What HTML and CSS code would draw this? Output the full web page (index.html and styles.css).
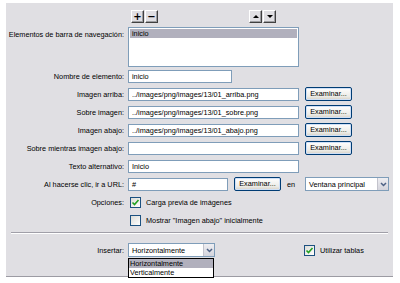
FILE: index.html
```html
<!DOCTYPE html>
<html lang="es">
<head>
<meta charset="utf-8">
<link rel="stylesheet" href="styles.css">
</head>
<body>
<div class="panel">
  <div class="toolrow">
    <div class="pm">
      <span class="sqbtn">+</span><span class="sqbtn">&minus;</span>
    </div>
    <div class="arrows">
      <span class="sqbtn"><span class="tri-up"></span></span><span class="sqbtn"><span class="tri-down"></span></span>
    </div>
  </div>

  <div class="form">
    <div class="row listrow">
      <label class="lbl lbl-top">Elementos de barra de navegación:</label>
      <div class="listbox"><div class="sel">inicio</div></div>
    </div>
    <div class="row">
      <label class="lbl">Nombre de elemento:</label>
      <div class="field short">inicio</div>
    </div>
    <div class="row">
      <label class="lbl">Imagen arriba:</label>
      <div class="field wide">../images/png/images/13/01_arriba.png</div>
      <span class="btn">Examinar...</span>
    </div>
    <div class="row">
      <label class="lbl">Sobre imagen:</label>
      <div class="field wide">../images/png/images/13/01_sobre.png</div>
      <span class="btn">Examinar...</span>
    </div>
    <div class="row">
      <label class="lbl">Imagen abajo:</label>
      <div class="field wide">../images/png/images/13/01_abajo.png</div>
      <span class="btn">Examinar...</span>
    </div>
    <div class="row">
      <label class="lbl">Sobre mientras imagen abajo:</label>
      <div class="field wide"></div>
      <span class="btn">Examinar...</span>
    </div>
    <div class="row">
      <label class="lbl">Texto alternativo:</label>
      <div class="field wide">Inicio</div>
    </div>
    <div class="row">
      <label class="lbl">Al hacerse clic, ir a URL:</label>
      <div class="field url">#</div>
      <span class="btn">Examinar...</span>
      <span class="en">en</span>
      <div class="select target"><span class="seltext">Ventana principal</span><span class="selarrow"><svg width="7" height="5" viewBox="0 0 7 5"><path d="M1 1 L3.5 3.5 L6 1" fill="none" stroke="#4d6185" stroke-width="1.5"/></svg></span></div>
    </div>
    <div class="row">
      <label class="lbl">Opciones:</label>
      <span class="check on"><svg width="9" height="9" viewBox="0 0 9 9"><path d="M1.5 4.5 L3.5 6.5 L7.5 2" fill="none" stroke="#21a121" stroke-width="1.6"/></svg></span>
      <span class="ctext">Carga previa de imágenes</span>
    </div>
    <div class="row">
      <label class="lbl"></label>
      <span class="check"></span>
      <span class="ctext">Mostrar "Imagen abajo" inicialmente</span>
    </div>
  </div>

  <div class="sep"></div>

  <div class="row insrow">
    <label class="lbl">Insertar:</label>
    <div class="selwrap">
      <div class="select ins"><span class="seltext">Horizontalmente</span><span class="selarrow"><svg width="7" height="5" viewBox="0 0 7 5"><path d="M1 1 L3.5 3.5 L6 1" fill="none" stroke="#4d6185" stroke-width="1.5"/></svg></span></div>
      <div class="droplist">
        <div class="opt hi">Horizontalmente</div>
        <div class="opt">Verticalmente</div>
      </div>
    </div>
    <span class="check on tables"><svg width="9" height="9" viewBox="0 0 9 9"><path d="M1.5 4.5 L3.5 6.5 L7.5 2" fill="none" stroke="#21a121" stroke-width="1.6"/></svg></span>
    <span class="ctext">Utilizar tablas</span>
  </div>
</div>
</body>
</html>
```

FILE: styles.css
```css
* { box-sizing: border-box; }
html, body { margin: 0; padding: 0; background: #ffffff; }
body {
  width: 400px;
  height: 283px;
  overflow: hidden;
  font-family: "Liberation Sans", Arial, sans-serif;
  font-size: 7.3px;
  color: #000;
  padding: 3px 0 0 6px;
}
.panel {
  width: 387px;
  height: 274px;
  background: #e0dfe3;
  border-bottom: 1px solid #9c9ba3;
  position: relative;
  padding-top: 7px;
}
.toolrow {
  display: flex;
  height: 13px;
  padding-left: 125px;
}
.pm, .arrows { display: flex; gap: 1px; }
.arrows { margin-left: 91px; }
.sqbtn {
  width: 13px;
  height: 13px;
  background: #e0dfe3;
  border: 1px solid;
  border-color: #ffffff #404040 #404040 #ffffff;
  box-shadow: inset -1px -1px 0 #9d9da1;
  display: flex;
  align-items: center;
  justify-content: center;
  font-weight: bold;
  font-size: 10px;
  line-height: 1;
  font-family: "DejaVu Sans", sans-serif;
}
.tri-up, .tri-down {
  width: 0; height: 0;
  border-left: 3px solid transparent;
  border-right: 3px solid transparent;
}
.tri-up { border-bottom: 3px solid #000; }
.tri-down { border-top: 3px solid #000; }

.form { display: flex; flex-direction: column; margin-top: 4px; }
.row {
  display: flex;
  align-items: center;
  height: 18px;
}
.lbl {
  width: 118px;
  text-align: right;
  margin-right: 4px;
  flex: none;
  white-space: nowrap;
}
.listrow { height: 40px; align-items: flex-start; }
.lbl-top { padding-top: 3px; }
.listbox {
  width: 171px;
  height: 40px;
  background: #fff;
  border: 1px solid #7f9db9;
  padding: 1px;
}
.listbox .sel {
  background: #b1b0bd;
  height: 9px;
  line-height: 9px;
  padding-left: 2px;
}
.field {
  height: 13px;
  background: #fff;
  border: 1px solid #7f9db9;
  padding-left: 3px;
  line-height: 11px;
  white-space: nowrap;
  overflow: hidden;
}
.field.short { width: 104px; }
.field.wide { width: 171px; }
.field.url { width: 100px; }
.btn {
  margin-left: 6px;
  width: 47px;
  height: 14px;
  border: 1px solid #003c74;
  border-radius: 2px;
  background: linear-gradient(#ffffff, #ecebe6 70%, #d6d0c5);
  box-shadow: inset 0 0 0 1px #cfe0f7;
  display: flex;
  align-items: center;
  justify-content: center;
  line-height: 1;
}
.en { margin-left: 6px; width: 18px; }
.select {
  height: 14px;
  background: #fff;
  border: 1px solid #7f9db9;
  display: flex;
  align-items: center;
}
.seltext { flex: 1; padding-left: 3px; white-space: nowrap; overflow: hidden; }
.selarrow {
  width: 11px;
  height: 12px;
  background: linear-gradient(#eeeef2, #d4d4dc);
  border-left: 1px solid #c3c3cc;
  display: flex;
  align-items: center;
  justify-content: center;
}
.select.target { width: 84px; }
.check {
  width: 11px;
  height: 11px;
  border: 1px solid #1c5180;
  background: linear-gradient(135deg, #dcdcd7, #ffffff);
  margin-left: 2px;
  margin-right: 5px;
  display: flex;
  align-items: center;
  justify-content: center;
  flex: none;
}
.sep {
  margin: 3px 5px 0 5px;
  height: 2px;
  border-top: 1px solid #a09fa8;
  border-bottom: 1px solid #ffffff;
}
.insrow { margin-top: 8px; height: 16px; }
.selwrap { position: relative; width: 87px; }
.select.ins { width: 87px; }
.droplist {
  position: absolute;
  left: 0;
  top: 15px;
  width: 86px;
  border: 1px solid #000;
  background: #fff;
  z-index: 2;
}
.opt { height: 9px; line-height: 9px; padding-left: 1px; }
.opt.hi { background: #b1b0bd; }
.check.tables { margin-left: 89px; }
```
